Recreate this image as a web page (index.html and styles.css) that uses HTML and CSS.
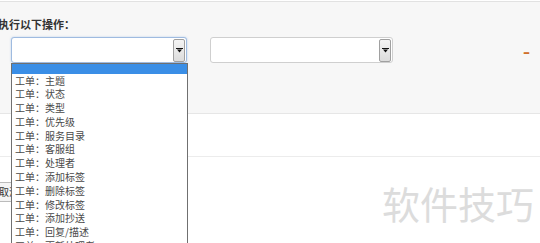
FILE: index.html
```html
<!DOCTYPE html>
<html lang="zh-CN">
<head>
    <meta charset="UTF-8">
    <title>触发器 - 执行操作</title>
    <link rel="stylesheet" href="styles.css">
</head>
<body>
    <div class="action-panel">
        <h4 class="panel-title">执行以下操作：</h4>
        <div class="action-row">
            <div class="select-box focused">
                <span class="select-text"></span>
                <span class="select-arrow">
                    <svg width="7" height="5" viewBox="0 0 7 5"><rect x="0" y="0" width="7" height="1" fill="#111"/><path d="M1 1.5 L6 1.5 L3.5 4.5 Z" fill="#111"/></svg>
                </span>
            </div>
            <div class="select-box wide">
                <span class="select-text"></span>
                <span class="select-arrow">
                    <svg width="7" height="5" viewBox="0 0 7 5"><rect x="0" y="0" width="7" height="1" fill="#111"/><path d="M1 1.5 L6 1.5 L3.5 4.5 Z" fill="#111"/></svg>
                </span>
            </div>
            <a class="remove-link" href="#">–</a>
        </div>

        <ul class="dropdown-list">
            <li class="selected"></li>
            <li>工单：主题</li>
            <li>工单：状态</li>
            <li>工单：类型</li>
            <li>工单：优先级</li>
            <li>工单：服务目录</li>
            <li>工单：客服组</li>
            <li>工单：处理者</li>
            <li>工单：添加标签</li>
            <li>工单：删除标签</li>
            <li>工单：修改标签</li>
            <li>工单：添加抄送</li>
            <li>工单：回复/描述</li>
            <li>工单：更新处理者</li>
        </ul>
    </div>

    <div class="blank-section"></div>

    <div class="button-section">
        <button class="btn">取消</button>
    </div>

    <div class="bottom-box"></div>

    <div class="watermark">软件技巧</div>
</body>
</html>
```

FILE: styles.css
```css
body {
    margin: 0;
    background: #fff;
    font-family: "Noto Sans CJK JP", "Noto Sans CJK SC", sans-serif;
    color: #333;
    width: 540px;
    height: 243px;
    overflow: hidden;
    position: relative;
}

.action-panel {
    position: relative;
    margin-top: 1px;
    border-top: 1px solid #e2e2e2;
    border-bottom: 1px solid #e6e6e6;
    background: #f7f7f7;
    height: 111px;
}

.panel-title {
    margin: 0 0 0 -2px;
    padding-top: 15px;
    font-size: 11px;
    line-height: 15px;
    font-weight: bold;
    color: #333;
}

.action-row {
    display: flex;
    align-items: center;
    padding-left: 11px;
    margin-top: 5px;
}

.select-box {
    display: flex;
    justify-content: space-between;
    align-items: center;
    box-sizing: border-box;
    width: 176px;
    height: 26px;
    padding: 0 1px 0 4px;
    background: #fff;
    border: 1px solid #cfcfcf;
    border-radius: 3px;
}

.select-box.focused {
    border-color: #9fbbe0;
    box-shadow: 0 0 2px rgba(110, 160, 220, 0.5);
}

.select-box.wide {
    width: 183px;
    margin-left: 23px;
}

.select-arrow {
    display: flex;
    align-items: center;
    justify-content: center;
    box-sizing: border-box;
    width: 12px;
    height: 23px;
    border: 1px solid #a0a0a0;
    border-radius: 2px;
    background: linear-gradient(#f4f4f4, #dcdcdc);
}

.remove-link {
    margin-left: auto;
    margin-right: 10px;
    margin-top: 4px;
    font-family: "DejaVu Sans", sans-serif;
    font-size: 14px;
    font-weight: bold;
    line-height: 14px;
    color: #d0702a;
    text-decoration: none;
}

.dropdown-list {
    position: absolute;
    left: 11px;
    top: 61px;
    z-index: 5;
    width: 177px;
    box-sizing: border-box;
    margin: 0;
    padding: 0;
    list-style: none;
    background: #fff;
    border: 1px solid #707070;
    font-size: 10px;
    color: #4a4a4a;
}

.dropdown-list li {
    height: 13.8px;
    line-height: 13.8px;
    padding-left: 3px;
    white-space: nowrap;
}

.dropdown-list li.selected {
    height: 9.5px;
    background: #3a8ee6;
}

.blank-section {
    height: 42px;
    border-bottom: 1px solid #ececec;
}

.button-section {
    padding: 20px 0 0 0;
    margin-left: -8px;
}

.btn {
    font-family: "Noto Sans CJK JP", sans-serif;
    font-size: 10px;
    padding: 1px 6px;
    height: 20px;
    background: #f4f4f4;
    border: 1px solid #bbb;
    border-radius: 2px;
    color: #333;
}

.bottom-box {
    margin-top: 42px;
    width: 378px;
    height: 10px;
    border-top: 2px solid #aaa;
}

.watermark {
    position: absolute;
    left: 382px;
    top: 178px;
    font-size: 38px;
    line-height: 50px;
    color: #dcdcdc;
}
```
